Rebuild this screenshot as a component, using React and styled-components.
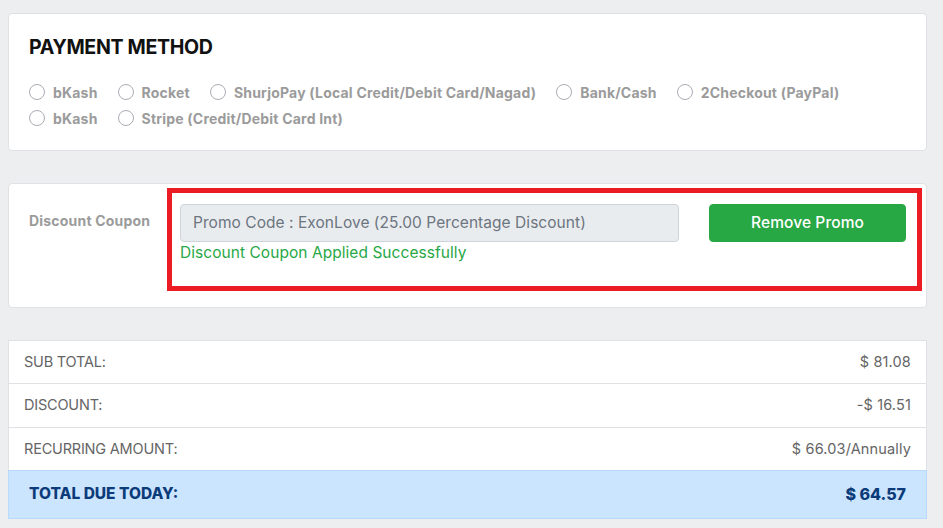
import React from "react";
import styled, { createGlobalStyle } from "styled-components";

const Global = createGlobalStyle`
  html, body { margin: 0; padding: 0; }
  body {
    background: #edeef0;
    font-family: Inter, "Noto Sans", Roboto, sans-serif;
  }
  * { box-sizing: border-box; }
`;

const Page = styled.div`
  padding: 13px 16px 9px 8px;
  display: flex;
  flex-direction: column;
  gap: 32px;
`;

const Card = styled.section`
  background: #fff;
  border: 1px solid #dfe1e4;
  border-radius: 4px;
`;

const MethodCard = styled(Card)`
  height: 138px;
  padding: 20px 20px 0 20px;
`;

const Title = styled.h2`
  margin: 0;
  font-size: 19.6px;
  line-height: 26px;
  font-weight: 700;
  color: #111;
  letter-spacing: -0.35px;
`;

const RadioGroup = styled.div`
  margin-top: 19px;
  display: flex;
  flex-direction: column;
`;

const RadioRow = styled.div`
  display: flex;
  align-items: center;
  gap: 20px;
  height: 26px;
`;

const RadioItem = styled.label`
  display: flex;
  align-items: center;
  gap: 8px;
  font-size: 14px;
  font-weight: 700;
  color: #9b9b9b;
  letter-spacing: 0.2px;
`;

const RadioCircle = styled.span`
  width: 16px;
  height: 16px;
  border-radius: 50%;
  border: 1px solid #a9adb3;
  background: #fff;
  flex: none;
`;

const CouponCard = styled(Card)`
  display: flex;
  padding: 4px 4px 16px 20px;
`;

const CouponLabel = styled.div`
  width: 138px;
  flex: none;
  padding-top: 24px;
  font-size: 14px;
  font-weight: 700;
  color: #9b9b9b;
  letter-spacing: 0.2px;
`;

const Highlight = styled.div`
  flex: 1;
  height: 103px;
  border: 5px solid #ec1c24;
  padding: 11px 11px 0 8px;
`;

const PromoRow = styled.div`
  display: flex;
  align-items: center;
  gap: 30px;
`;

const PromoInput = styled.div`
  width: 499px;
  height: 38px;
  background: #e9ecef;
  border: 1px solid #ced4da;
  border-radius: 4px;
  padding: 0 12px 2px;
  display: flex;
  align-items: center;
  font-size: 15.5px;
  color: #6c7580;
  letter-spacing: 0.05px;
`;

const RemoveButton = styled.button`
  flex: 1;
  height: 38px;
  padding: 0 0 2px;
  background: #28a745;
  border: 1px solid #28a745;
  border-radius: 4px;
  color: #fff;
  font-family: inherit;
  font-size: 15.5px;
  font-weight: 500;
  letter-spacing: 0.1px;
`;

const Success = styled.div`
  margin-top: 0;
  font-size: 15.5px;
  line-height: 22px;
  color: #28a745;
  letter-spacing: 0.05px;
`;

const Summary = styled.div`
  background: #fff;
  border: 1px solid #dfe1e4;
  display: flex;
  flex-direction: column;
`;

const SumRow = styled.div`
  display: flex;
  justify-content: space-between;
  align-items: center;
  height: ${(p) => p.$h}px;
  padding: 0 15px 2px;
  font-size: 14.5px;
  color: #656565;
  border-top: ${(p) => (p.$first ? "none" : "1px solid #dfe1e4")};
  letter-spacing: -0.2px;
`;

const SumValue = styled.span`
  letter-spacing: 0.15px;
`;

const TotalRow = styled.div`
  display: flex;
  justify-content: space-between;
  align-items: center;
  height: 49px;
  padding: 0 20px 2px;
  background: #cce5ff;
  border: 1px solid #b8daff;
  margin: 0 -1px -1px;
  font-size: 15.5px;
  font-weight: 800;
  color: #0c3b7a;
  letter-spacing: 0;
`;

const TotalValue = styled.span`
  font-size: 16px;
`;

const methods = [
  ["bKash", "Rocket", "ShurjoPay (Local Credit/Debit Card/Nagad)", "Bank/Cash", "2Checkout (PayPal)"],
  ["bKash", "Stripe (Credit/Debit Card Int)"],
];

export default function App() {
  return (
    <>
      <Global />
      <Page>
        <MethodCard>
          <Title>PAYMENT METHOD</Title>
          <RadioGroup>
            {methods.map((row, i) => (
              <RadioRow key={i}>
                {row.map((m, j) => (
                  <RadioItem key={j}>
                    <RadioCircle />
                    {m}
                  </RadioItem>
                ))}
              </RadioRow>
            ))}
          </RadioGroup>
        </MethodCard>

        <CouponCard>
          <CouponLabel>Discount Coupon</CouponLabel>
          <Highlight>
            <PromoRow>
              <PromoInput>Promo Code : ExonLove (25.00 Percentage Discount)</PromoInput>
              <RemoveButton>Remove Promo</RemoveButton>
            </PromoRow>
            <Success>Discount Coupon Applied Successfully</Success>
          </Highlight>
        </CouponCard>

        <Summary>
          <SumRow $h={42} $first>
            <span>SUB TOTAL:</span>
            <SumValue>$ 81.08</SumValue>
          </SumRow>
          <SumRow $h={44}>
            <span>DISCOUNT:</span>
            <SumValue>-$ 16.51</SumValue>
          </SumRow>
          <SumRow $h={43}>
            <span>RECURRING AMOUNT:</span>
            <SumValue>$ 66.03/Annually</SumValue>
          </SumRow>
          <TotalRow>
            <span>TOTAL DUE TODAY:</span>
            <TotalValue>$ 64.57</TotalValue>
          </TotalRow>
        </Summary>
      </Page>
    </>
  );
}
